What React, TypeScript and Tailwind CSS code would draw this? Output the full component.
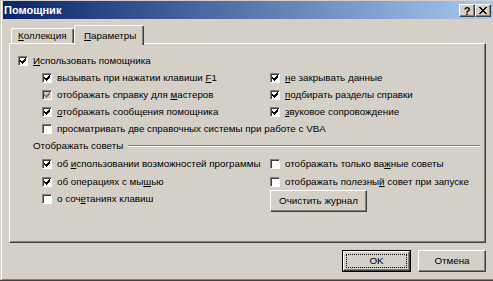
import React from "react";

function Box({ checked = false, disabled = false }: { checked?: boolean; disabled?: boolean }) {
  return (
    <span
      className={`relative block w-[10px] h-[10px] shrink-0 border border-t-[#808080] border-l-[#808080] border-b-white border-r-white shadow-[inset_1px_1px_0_#404040] ${
        disabled ? "bg-[#D4D0C8]" : "bg-white"
      }`}
    >
      {checked && (
        <svg width="8" height="8" viewBox="0 0 8 8" className="absolute left-0 top-0" shapeRendering="crispEdges">
          <path
            d="M6 1h1v1h-1zM5 2h2v1h-2zM1 3h1v1h-1zM4 3h3v1h-3zM1 4h2v1h-2zM3 4h3v1h-3zM2 5h3v1h-3zM3 6h1v1h-1z"
            fill={disabled ? "#808080" : "#000"}
          />
        </svg>
      )}
    </span>
  );
}

function Item({
  label,
  checked = false,
  disabled = false,
  className = "",
}: {
  label: React.ReactNode;
  checked?: boolean;
  disabled?: boolean;
  className?: string;
}) {
  return (
    <div className={`flex items-center gap-[5px] whitespace-nowrap ${className}`}>
      <Box checked={checked} disabled={disabled} />
      <span className="leading-none">{label}</span>
    </div>
  );
}

const U = ({ children }: { children: React.ReactNode }) => <span className="underline underline-offset-[1px]">{children}</span>;

export default function App() {
  return (
    <div className="w-[493px] h-[281px] bg-[#D4D0C8] overflow-hidden pt-[1px] pl-[1px] border-b border-b-[#404040] font-['Liberation_Sans',Arial,sans-serif] text-[9.8px] text-black">
      <div className="h-full border-l border-l-white border-b border-b-[#808080] pl-[1px] flex flex-col">
        {/* Title bar */}
        <div className="h-[18px] shrink-0 flex items-start bg-[linear-gradient(to_right,#0A246A,#A6CAF0)]">
          <span className="pl-[1px] self-center text-white font-bold text-[11px] leading-none">Помощник</span>
          <div className="ml-auto mr-[2px] mt-[3px] flex">
            <div className="w-[16px] h-[13px] bg-[#D4D0C8] border border-t-white border-l-white border-b-[#404040] border-r-[#404040] shadow-[inset_-1px_-1px_0_#808080] flex items-center justify-center">
              <span className="font-bold text-[11px] leading-none mt-[1px]">?</span>
            </div>
            <div className="w-[16px] h-[13px] bg-[#D4D0C8] border border-t-white border-l-white border-b-[#404040] border-r-[#404040] shadow-[inset_-1px_-1px_0_#808080] flex items-center justify-center">
              <svg width="8" height="7" viewBox="0 0 8 7" shapeRendering="crispEdges">
                <path d="M0 0h2v1h-2zM6 0h2v1h-2zM1 1h2v1h-2zM5 1h2v1h-2zM2 2h4v1h-4zM3 3h2v1h-2zM2 4h4v1h-4zM1 5h2v1h-2zM5 5h2v1h-2zM0 6h2v1h-2zM6 6h2v1h-2z" fill="#000" />
              </svg>
            </div>
          </div>
        </div>

        {/* Tabs */}
        <div className="mt-[6px] ml-[6px] h-[18px] flex items-end pl-[2px] relative z-10">
          <div className="w-[63px] h-[15px] border-t border-l border-t-white border-l-white border-r border-r-[#404040] shadow-[inset_-1px_0_0_#808080] rounded-tl-[2px] rounded-tr-[2px] flex items-center pl-[6px] leading-none">
            <span>
              <U>К</U>оллекция
            </span>
          </div>
          <div className="w-[70px] h-[20px] mb-[-2px] bg-[#D4D0C8] border-t border-l border-t-white border-l-white border-r border-r-[#404040] shadow-[inset_-1px_0_0_#808080] rounded-tl-[2px] rounded-tr-[2px] flex items-start pt-[5px] pl-[9px] leading-none">
            <span>
              <U>П</U>араметры
            </span>
          </div>
        </div>

        {/* Panel */}
        <div className="ml-[6px] w-[477px] h-[200px] border border-t-white border-l-white border-r-[#404040] border-b-[#404040] shadow-[inset_-1px_-1px_0_#808080] pt-[8px] pl-[8px] flex flex-col">
          <Item className="h-[17px]" checked label={<><U>И</U>спользовать помощника</>} />
          <div className="grid grid-cols-[228px_1fr] ml-[24px]">
            <Item className="h-[17px]" checked label={<>вызывать при нажатии клавиши <U>F</U>1</>} />
            <Item className="h-[17px]" checked label={<><U>н</U>е закрывать данные</>} />
            <Item className="h-[17px]" checked disabled label={<>отображать справку для <U>м</U>астеров</>} />
            <Item className="h-[17px]" checked label={<><U>п</U>одбирать разделы справки</>} />
            <Item className="h-[17px]" checked label={<><U>о</U>тображать сообщения помощника</>} />
            <Item className="h-[17px]" checked label={<><U>з</U>вуковое сопровождение</>} />
          </div>
          <Item className="h-[17px] ml-[24px]" label={<>просматривать <U>д</U>ве справочных системы при работе с VBA</>} />

          <div className="h-[18px] flex items-center pl-[15px] pr-[5px]">
            <span className="leading-none whitespace-nowrap">Отображать советы</span>
            <div className="flex-1 ml-[5px] h-[2px] border-t border-t-[#808080] border-b border-b-white" />
          </div>

          <div className="grid grid-cols-[228px_1fr] ml-[24px]">
            <Item className="h-[18px]" checked label={<>об <U>и</U>спользовании возможностей программы</>} />
            <Item className="h-[18px]" label={<>отображать только ва<U>ж</U>ные советы</>} />
            <Item className="h-[17px]" checked label={<>об операциях с мы<U>ш</U>ью</>} />
            <Item className="h-[17px]" label={<>отображать полезны<U>й</U> совет при запуске</>} />
            <Item className="h-[18px]" label={<>о соч<U>е</U>таниях клавиш</>} />
            <div className="h-[18px] flex items-start">
              <div className="w-[97px] h-[22px] shrink-0 bg-[#D4D0C8] border border-t-white border-l-white border-b-[#404040] border-r-[#404040] shadow-[inset_-1px_-1px_0_#808080] flex items-center justify-center leading-none">
                Очистить журнал
              </div>
            </div>
          </div>
        </div>

        {/* Buttons */}
        <div className="mt-[7px] flex justify-end pr-[7px] gap-[7px]">
          <div className="w-[69px] h-[22px] border border-black">
            <div className="w-full h-full border border-t-white border-l-white border-b-[#404040] border-r-[#404040] shadow-[inset_-1px_-1px_0_#808080] p-[2px]">
              <div className="w-full h-full border border-dotted border-black flex items-center justify-center leading-none">
                OK
              </div>
            </div>
          </div>
          <div className="w-[68px] h-[22px] border border-t-white border-l-white border-b-[#404040] border-r-[#404040] shadow-[inset_-1px_-1px_0_#808080] flex items-center justify-center leading-none">
            Отмена
          </div>
        </div>
      </div>
    </div>
  );
}
